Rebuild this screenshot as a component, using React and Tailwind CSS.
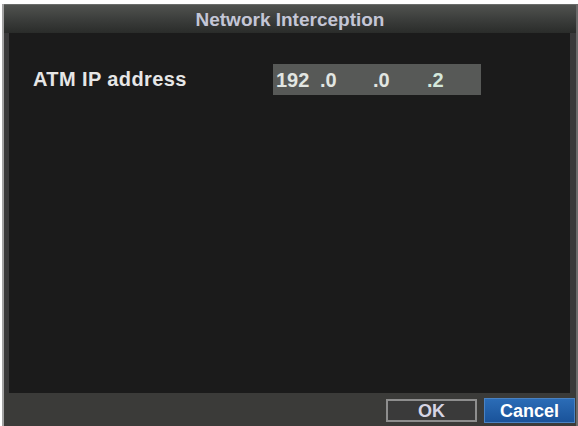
export default function App() {
  return (
    <div className="w-[578px] h-[426px] bg-white pt-[4px] pl-[2px] overflow-hidden font-['Liberation_Sans',Arial,sans-serif]">
      <div className="h-full flex flex-col border-l-[2px] border-[#a4a4a4] border-r-[2px] border-r-[#6a6a6a] bg-[#3a3a3a]">
        <div className="h-[29px] flex items-center justify-center bg-gradient-to-b from-[#50524f] via-[#3c3e3c] to-[#2a2c2a] border-t border-[#6a6c6a]">
          <span className="text-[19px] font-bold text-[#c4c6d6] tracking-[0px] leading-none">Network Interception</span>
        </div>
        <div className="flex-1 ml-[5px] mr-[6px] bg-[#1b1b1b] pt-[31px] pl-[24px] flex items-start">
          <span className="w-[240px] text-[20px] font-bold text-[#e6e6e6] leading-[31px] tracking-[0.4px]">ATM IP address</span>
          <div className="w-[208px] h-[31px] bg-[#575957] flex items-center pl-[3px] text-[20px] font-bold text-[#e2e6e2] leading-none">
            <span className="w-[44px]">192</span>
            <span className="w-[53px]">.0</span>
            <span className="w-[54px]">.0</span>
            <span className="text-[#d4e8dc]">.2</span>
          </div>
        </div>
        <div className="h-[33px] bg-[#3b3b39] flex items-center justify-end gap-[7px] pr-[1px] pt-[2px]">
          <button className="w-[91px] h-[23px] bg-[#3a3a3a] border-[2px] border-[#8e8e8e] text-[#d6d4e4] text-[18px] font-bold leading-none flex items-center justify-center">OK</button>
          <button className="w-[91px] h-[25px] bg-gradient-to-b from-[#2b6cb6] to-[#1a539a] border border-[#4a82c2] text-white text-[18px] font-bold leading-none flex items-center justify-center">Cancel</button>
        </div>
      </div>
    </div>
  );
}
